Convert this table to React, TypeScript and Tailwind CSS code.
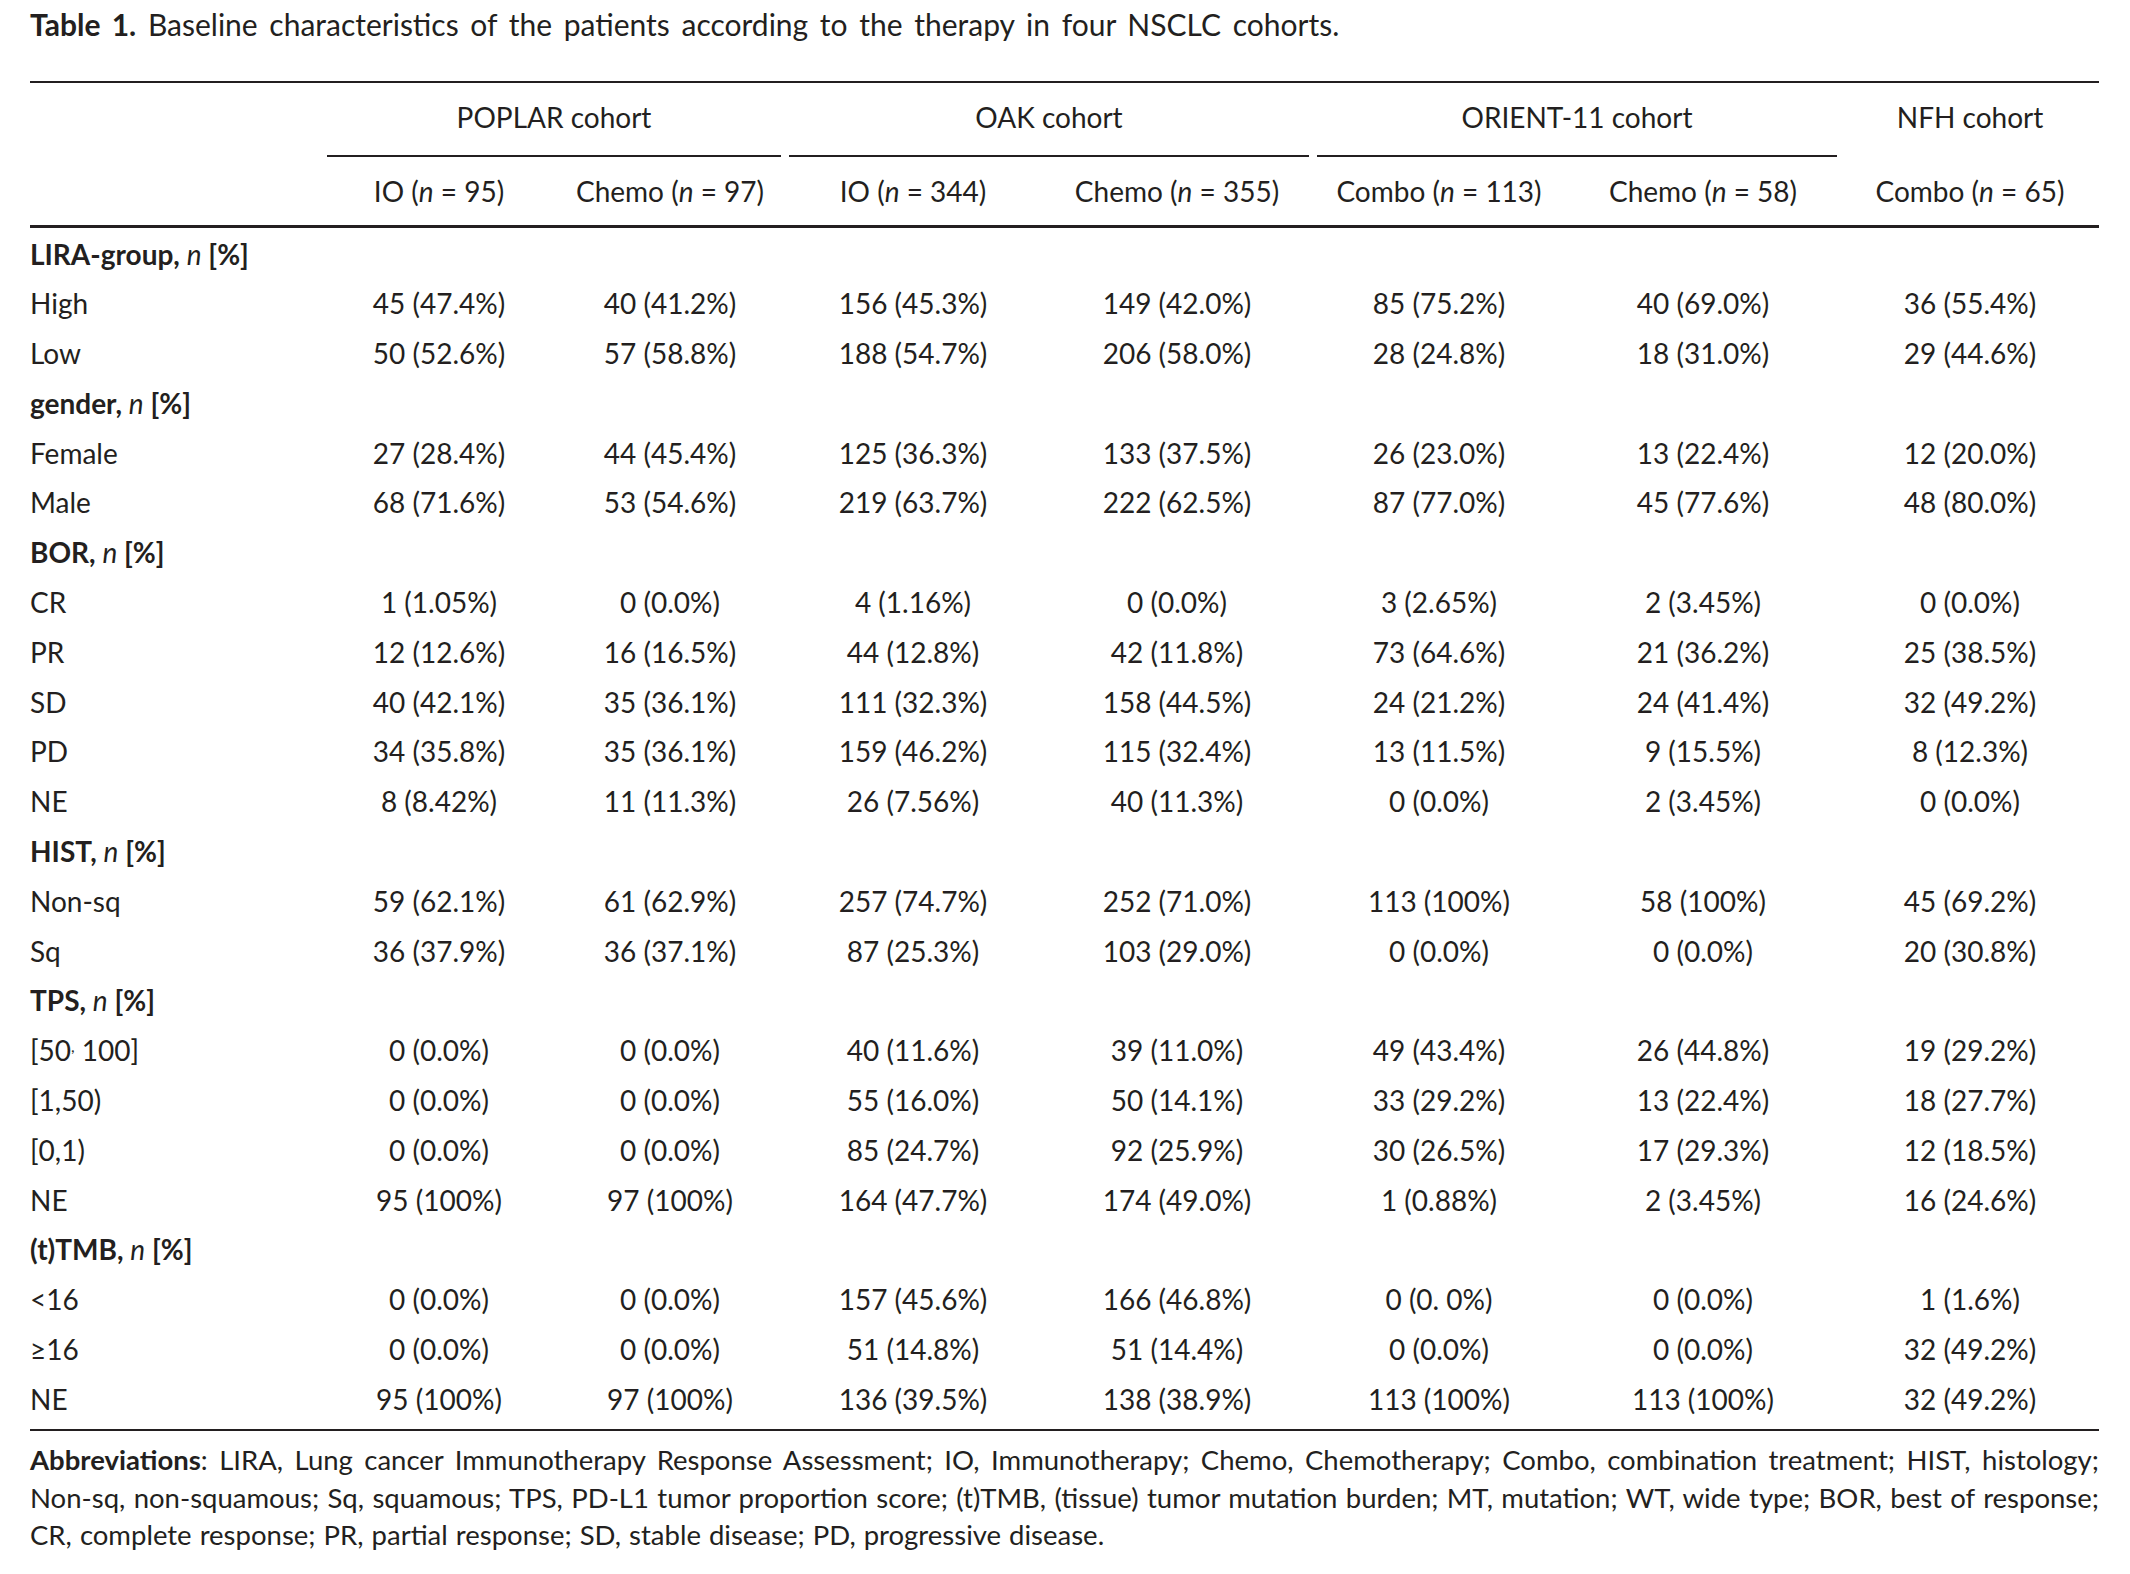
import type { ReactNode } from 'react'

const cols = 'grid grid-cols-[293px_232px_230px_256px_272px_252px_276px_258px]'

type Row = { label: string; values?: string[]; head?: boolean }

// section headings get bold label + italic n
const rows: Row[] = [
  { label: 'LIRA-group', head: true },
  { label: 'High', values: ['45 (47.4%)', '40 (41.2%)', '156 (45.3%)', '149 (42.0%)', '85 (75.2%)', '40 (69.0%)', '36 (55.4%)'] },
  { label: 'Low', values: ['50 (52.6%)', '57 (58.8%)', '188 (54.7%)', '206 (58.0%)', '28 (24.8%)', '18 (31.0%)', '29 (44.6%)'] },
  { label: 'gender', head: true },
  { label: 'Female', values: ['27 (28.4%)', '44 (45.4%)', '125 (36.3%)', '133 (37.5%)', '26 (23.0%)', '13 (22.4%)', '12 (20.0%)'] },
  { label: 'Male', values: ['68 (71.6%)', '53 (54.6%)', '219 (63.7%)', '222 (62.5%)', '87 (77.0%)', '45 (77.6%)', '48 (80.0%)'] },
  { label: 'BOR', head: true },
  { label: 'CR', values: ['1 (1.05%)', '0 (0.0%)', '4 (1.16%)', '0 (0.0%)', '3 (2.65%)', '2 (3.45%)', '0 (0.0%)'] },
  { label: 'PR', values: ['12 (12.6%)', '16 (16.5%)', '44 (12.8%)', '42 (11.8%)', '73 (64.6%)', '21 (36.2%)', '25 (38.5%)'] },
  { label: 'SD', values: ['40 (42.1%)', '35 (36.1%)', '111 (32.3%)', '158 (44.5%)', '24 (21.2%)', '24 (41.4%)', '32 (49.2%)'] },
  { label: 'PD', values: ['34 (35.8%)', '35 (36.1%)', '159 (46.2%)', '115 (32.4%)', '13 (11.5%)', '9 (15.5%)', '8 (12.3%)'] },
  { label: 'NE', values: ['8 (8.42%)', '11 (11.3%)', '26 (7.56%)', '40 (11.3%)', '0 (0.0%)', '2 (3.45%)', '0 (0.0%)'] },
  { label: 'HIST', head: true },
  { label: 'Non-sq', values: ['59 (62.1%)', '61 (62.9%)', '257 (74.7%)', '252 (71.0%)', '113 (100%)', '58 (100%)', '45 (69.2%)'] },
  { label: 'Sq', values: ['36 (37.9%)', '36 (37.1%)', '87 (25.3%)', '103 (29.0%)', '0 (0.0%)', '0 (0.0%)', '20 (30.8%)'] },
  { label: 'TPS', head: true },
  { label: '[50,100]', values: ['0 (0.0%)', '0 (0.0%)', '40 (11.6%)', '39 (11.0%)', '49 (43.4%)', '26 (44.8%)', '19 (29.2%)'] },
  { label: '[1,50)', values: ['0 (0.0%)', '0 (0.0%)', '55 (16.0%)', '50 (14.1%)', '33 (29.2%)', '13 (22.4%)', '18 (27.7%)'] },
  { label: '[0,1)', values: ['0 (0.0%)', '0 (0.0%)', '85 (24.7%)', '92 (25.9%)', '30 (26.5%)', '17 (29.3%)', '12 (18.5%)'] },
  { label: 'NE', values: ['95 (100%)', '97 (100%)', '164 (47.7%)', '174 (49.0%)', '1 (0.88%)', '2 (3.45%)', '16 (24.6%)'] },
  { label: '(t)TMB', head: true },
  { label: '<16', values: ['0 (0.0%)', '0 (0.0%)', '157 (45.6%)', '166 (46.8%)', '0 (0. 0%)', '0 (0.0%)', '1 (1.6%)'] },
  { label: '≥16', values: ['0 (0.0%)', '0 (0.0%)', '51 (14.8%)', '51 (14.4%)', '0 (0.0%)', '0 (0.0%)', '32 (49.2%)'] },
  { label: 'NE', values: ['95 (100%)', '97 (100%)', '136 (39.5%)', '138 (38.9%)', '113 (100%)', '113 (100%)', '32 (49.2%)'] },
]

const arms = [
  ['IO', '95'],
  ['Chemo', '97'],
  ['IO', '344'],
  ['Chemo', '355'],
  ['Combo', '113'],
  ['Chemo', '58'],
  ['Combo', '65'],
]

function Label({ text }: { text: string }) {
  // odd raised comma in the source pdf
  if (text === '[50,100]') {
    return (
      <span>
        [50<span className="relative -top-[9px] text-[16px] leading-none">,</span> 100]
      </span>
    )
  }
  return <span>{text}</span>
}

function Group({ span, children, line = true }: { span: string; children: ReactNode; line?: boolean }) {
  return (
    <div className={span}>
      <div
        className={`mx-[4px] border-b-2 pb-[4px] text-center leading-[68px] ${line ? 'border-[#231f20]' : 'border-transparent'}`}
      >
        {children}
      </div>
    </div>
  )
}

export default function App() {
  return (
    <div className="min-h-screen bg-white pl-[30px] pr-[31px] pt-[6px] font-['Lato',sans-serif] text-[28px] text-[#231f20]">
      <p className="text-[30px] leading-[36px] [word-spacing:4px]">
        <b className="font-bold">Table 1.</b> Baseline characteristics of the patients according to the therapy in four NSCLC cohorts.
      </p>

      <div className="mt-[39px] h-[2px] bg-[#231f20]" />

      {/* cohort header */}
      <div className={cols}>
        <div />
        <Group span="col-span-2">POPLAR cohort</Group>
        <Group span="col-span-2">OAK cohort</Group>
        <Group span="col-span-2">ORIENT-11 cohort</Group>
        <Group span="col-span-1" line={false}>
          NFH cohort
        </Group>
      </div>
      <div className={`${cols} leading-[68px]`}>
        <div />
        {arms.map(([arm, n], i) => (
          <div key={i} className="text-center">
            {arm} (<i>n</i> = {n})
          </div>
        ))}
      </div>
      <div className="h-[3px] bg-[#231f20]" />

      {rows.map((r, i) => (
        <div key={i} className={`${cols} h-[49.8px] pt-[5.5px] leading-[41.8px]`}>
          {r.head ? (
            <div className="col-span-8 whitespace-nowrap font-bold">
              {r.label}, <i className="font-normal">n</i> [%]
            </div>
          ) : (
            <>
              <div>
                <Label text={r.label} />
              </div>
              {r.values!.map((v, j) => (
                <div key={j} className="text-center">
                  {v}
                </div>
              ))}
            </>
          )}
        </div>
      ))}

      <div className="mt-[6px] h-[2px] bg-[#231f20]" />

      <div className="mt-[10px] text-[27.5px] leading-[37.4px]">
        <p className="text-justify [text-align-last:justify] [word-spacing:-4px]">
          <b className="font-bold">Abbreviations</b>: LIRA, Lung cancer Immunotherapy Response Assessment; IO, Immunotherapy; Chemo, Chemotherapy; Combo, combination treatment; HIST, histology;
        </p>
        <p className="text-justify [text-align-last:justify] [word-spacing:-4px]">
          Non-sq, non-squamous; Sq, squamous; TPS, PD-L1 tumor proportion score; (t)TMB, (tissue) tumor mutation burden; MT, mutation; WT, wide type; BOR, best of response;
        </p>
        <p className="[word-spacing:1px]">CR, complete response; PR, partial response; SD, stable disease; PD, progressive disease.</p>
      </div>
    </div>
  )
}
